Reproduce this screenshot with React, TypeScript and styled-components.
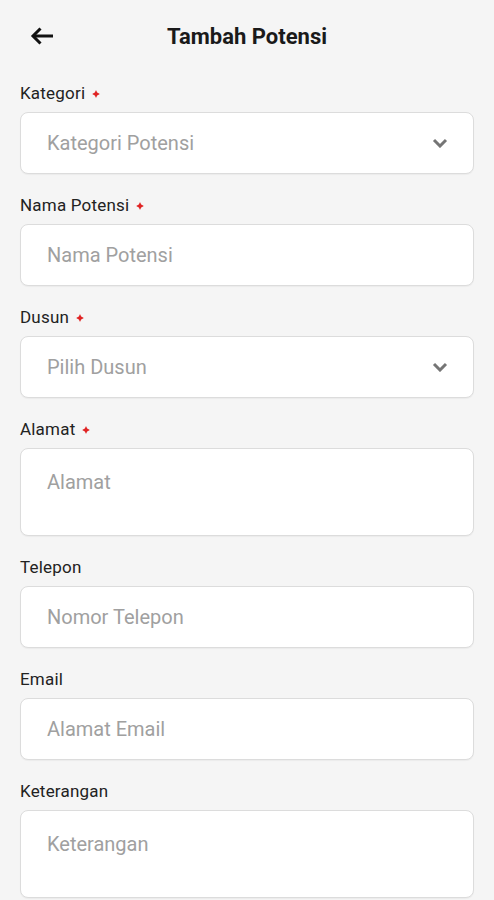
import React from 'react'
import styled, { createGlobalStyle } from 'styled-components'

const GlobalStyle = createGlobalStyle`
  html, body {
    margin: 0;
    padding: 0;
    background: #f5f5f5;
  }
  body {
    font-family: Roboto, 'Noto Sans', sans-serif;
  }
`

interface IField {
  label: string
  placeholder: string
  required?: boolean
  select?: boolean
  multiline?: boolean
}

const fields: IField[] = [
  { label: 'Kategori', placeholder: 'Kategori Potensi', required: true, select: true },
  { label: 'Nama Potensi', placeholder: 'Nama Potensi', required: true },
  { label: 'Dusun', placeholder: 'Pilih Dusun', required: true, select: true },
  { label: 'Alamat', placeholder: 'Alamat', required: true, multiline: true },
  { label: 'Telepon', placeholder: 'Nomor Telepon' },
  { label: 'Email', placeholder: 'Alamat Email' },
  { label: 'Keterangan', placeholder: 'Keterangan', multiline: true }
]

const Page = styled.div`
  width: 494px;
  min-height: 900px;
  background: #f5f5f5;
`

const Header = styled.header`
  display: grid;
  grid-template-columns: 60px 1fr 60px;
  align-items: center;
  height: 72px;
`

const BackButton = styled.button`
  display: flex;
  align-items: center;
  justify-content: center;
  width: 60px;
  height: 72px;
  padding: 0 0 0 23px;
  border: none;
  background: transparent;
  color: #111;
`

const Title = styled.h1`
  margin: 0;
  text-align: center;
  font-size: 22px;
  font-weight: 700;
  color: #1a1a1a;
`

const Form = styled.form`
  display: flex;
  flex-direction: column;
  gap: 21px;
  padding: 11px 20px 0;
`

const Field = styled.div`
  display: flex;
  flex-direction: column;
  gap: 9px;
`

const Label = styled.label`
  display: flex;
  align-items: center;
  gap: 8px;
  height: 20px;
  font-size: 17px;
  letter-spacing: 0.2px;
  color: #222;
`

const Required = styled.span`
  display: block;
  width: 6px;
  height: 6px;
  margin-top: 1px;
  background: #e02424;
  clip-path: polygon(50% 0, 65% 32%, 100% 50%, 65% 68%, 50% 100%, 35% 68%, 0 50%, 35% 32%);
  transform: scale(1.3);
`

const Box = styled.div<{ $multiline?: boolean }>`
  display: flex;
  align-items: ${(p) => (p.$multiline ? 'flex-start' : 'center')};
  justify-content: space-between;
  box-sizing: border-box;
  height: ${(p) => (p.$multiline ? '88px' : '62px')};
  padding: ${(p) => (p.$multiline ? '21px 26px 0' : '0 26px')};
  background: #fff;
  border: 1px solid #dcdcdc;
  border-radius: 8px;
  box-shadow: 0 1px 1px rgba(0, 0, 0, 0.04);
`

const Placeholder = styled.span`
  font-size: 20px;
  color: #a0a0a0;
`

const Chevron = styled.svg`
  width: 16px;
  height: 10px;
  margin-right: -1px;
`

const App: React.FC = () => {
  return (
    <Page>
      <GlobalStyle />
      <Header>
        <BackButton aria-label="Kembali">
          <svg width="24" height="18" viewBox="0 0 24 18" fill="none">
            <path d="M23 9H3" stroke="#111" strokeWidth="3" />
            <path d="M10.5 1.5 3 9l7.5 7.5" stroke="#111" strokeWidth="3" />
          </svg>
        </BackButton>
        <Title>Tambah Potensi</Title>
        <span />
      </Header>

      <Form>
        {fields.map((f) => (
          <Field key={f.label}>
            <Label>
              {f.label}
              {f.required && <Required />}
            </Label>
            <Box $multiline={f.multiline}>
              <Placeholder>{f.placeholder}</Placeholder>
              {f.select && (
                <Chevron viewBox="0 0 16 10" fill="none">
                  <path d="M2 2l6 6 6-6" stroke="#757575" strokeWidth="3" />
                </Chevron>
              )}
            </Box>
          </Field>
        ))}
      </Form>
    </Page>
  )
}

export default App
